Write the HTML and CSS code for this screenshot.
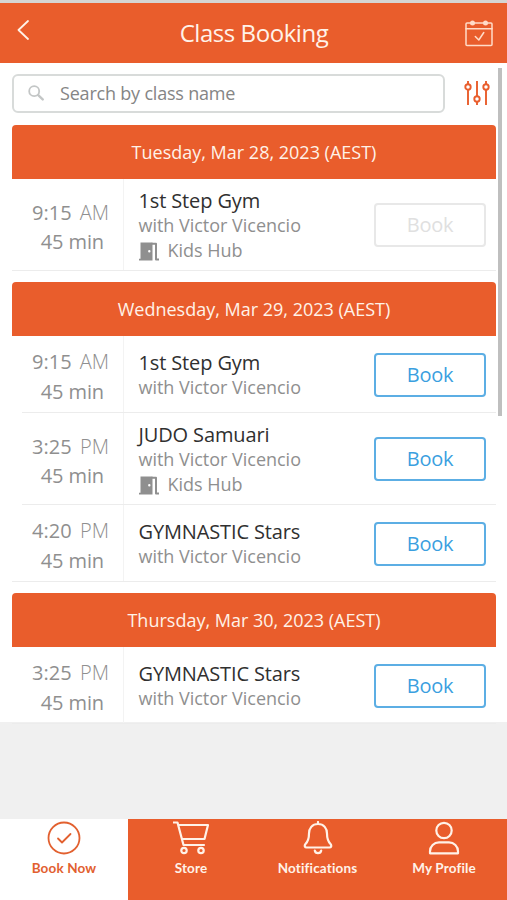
FILE: index.html
```html
<!DOCTYPE html>
<html lang="en">
<head>
<meta charset="utf-8">
<title>Class Booking</title>
<link rel="stylesheet" href="styles.css">
</head>
<body>
<svg class="defs" aria-hidden="true">
  <symbol id="door" viewBox="0 0 20 19">
    <path fill="currentColor" d="M1.500 .5H13.500V18.500H0V16.700H1.500ZM10.300 8a1.200 1.200 0 1 0 0 2.400a1.200 1.200 0 1 0 0-2.400Z" fill-rule="evenodd"/>
    <path fill="none" stroke="currentColor" stroke-width="2" d="M13 1.800h4v15.700h3"/>
  </symbol>
</svg>
<header class="topbar">
  <svg class="back" viewBox="0 0 12 20"><path d="M11 1 1.500 10 11 19"/></svg>
  <h1>Class Booking</h1>
  <svg class="calendar" viewBox="0 0 28 28"><rect x="1" y="4" width="26" height="22.500" rx="1"/><path d="M1 9.800h26M10.300 17.500l3.500 3.500 5-7.500"/><circle class="dot" cx="7.500" cy="4" r="2.500"/><circle class="dot" cx="20.500" cy="4" r="2.500"/></svg>
</header>
<main class="content">
  <div class="search-row">
    <div class="search">
      <svg viewBox="0 0 16 16"><circle cx="6.200" cy="6.200" r="5"/><path class="handle" d="m10.200 10.200 4.500 4.200"/></svg>
      <span>Search by class name</span>
    </div>
    <svg class="filter" viewBox="0 0 26 26"><path d="M4 1v3M4 10v15M13 1v15M13 22v3M22 1v3M22 10v15"/><circle cx="4" cy="7" r="2.700"/><circle cx="13" cy="19" r="2.700"/><circle cx="22" cy="7" r="2.700"/></svg>
  </div>
  <section class="day">
    <h2>Tuesday, Mar 28, 2023 (AEST)</h2>
    <article class="slot tall">
      <div class="time"><p>9:15 <i>AM</i></p><p class="length">45 min</p></div>
      <div class="info"><h3>1st Step Gym</h3><p>with Victor Vicencio</p><p class="room"><svg><use href="#door"/></svg>Kids Hub</p></div>
      <button class="book" disabled>Book</button>
    </article>
  </section>
  <section class="day">
    <h2>Wednesday, Mar 29, 2023 (AEST)</h2>
    <article class="slot">
      <div class="time"><p>9:15 <i>AM</i></p><p class="length">45 min</p></div>
      <div class="info"><h3>1st Step Gym</h3><p>with Victor Vicencio</p></div>
      <button class="book">Book</button>
    </article>
    <article class="slot tall">
      <div class="time"><p>3:25 <i>PM</i></p><p class="length">45 min</p></div>
      <div class="info"><h3>JUDO Samuari</h3><p>with Victor Vicencio</p><p class="room"><svg><use href="#door"/></svg>Kids Hub</p></div>
      <button class="book">Book</button>
    </article>
    <article class="slot">
      <div class="time"><p>4:20 <i>PM</i></p><p class="length">45 min</p></div>
      <div class="info"><h3>GYMNASTIC Stars</h3><p>with Victor Vicencio</p></div>
      <button class="book">Book</button>
    </article>
  </section>
  <section class="day">
    <h2>Thursday, Mar 30, 2023 (AEST)</h2>
    <article class="slot">
      <div class="time"><p>3:25 <i>PM</i></p><p class="length">45 min</p></div>
      <div class="info"><h3>GYMNASTIC Stars</h3><p>with Victor Vicencio</p></div>
      <button class="book">Book</button>
    </article>
  </section>
  <div class="scrollbar"></div>
</main>
<nav class="tabs">
  <a class="tab active"><svg viewBox="0 0 36 34"><circle cx="18" cy="17" r="15.500"/><path d="m12 17.500 4 4L24.500 13"/></svg><span>Book Now</span></a>
  <a class="tab"><svg viewBox="0 0 36 34"><path d="M0 1.500h4.500L10.500 24h20.500M5.500 4H35l-3.500 14H9.500"/><circle cx="11" cy="29.500" r="2.700"/><circle cx="28" cy="29.500" r="2.700"/></svg><span>Store</span></a>
  <a class="tab"><svg viewBox="0 0 36 34"><path d="M18 1v2M18 3c-6 0-9 4.500-9 9.500 0 6-1 8-3.500 10.500-1.500 2-.5 3.500 1 3.500h23c1.500 0 2.500-1.500 1-3.500C28 20.500 27 18.500 27 12.500 27 7.500 24 3 18 3ZM14.800 29.500c.5 3.500 5.900 3.500 6.400 0"/></svg><span>Notifications</span></a>
  <a class="tab"><svg viewBox="0 0 36 34"><circle cx="18" cy="9.500" r="7.700"/><path d="M4 32.300v-2c0-5 4-9 9-9h10c5 0 9 4 9 9v2Z"/></svg><span>My Profile</span></a>
</nav>
</body>
</html>
```
FILE: styles.css
```css
* { box-sizing: border-box; }
body {
  margin: 0;
  width: 507px;
  height: 900px;
  display: flex;
  flex-direction: column;
  overflow: hidden;
  background: #f0f0f0;
  font-family: "Open Sans", "Noto Sans", sans-serif;
  color: #8f8f8f;
}
h1, h2, h3, p { margin: 0; font-weight: 400; white-space: nowrap; }
svg { display: block; fill: none; stroke-linecap: round; stroke-linejoin: round; }
.defs { position: absolute; width: 0; height: 0; }

.topbar {
  flex: none;
  height: 63px;
  padding: 0 14px 0 17px;
  border-top: 3px solid #d5d5d3;
  background: #e95d2c;
  display: grid;
  grid-template-columns: 28px 1fr 28px;
  align-items: center;
  color: #fff2e8;
}
.topbar h1 { text-align: center; font-size: 24px; line-height: 34px; letter-spacing: -.45px; padding-right: 2px; }
.back { width: 12px; height: 20px; margin-top: -6px; stroke: #fff2e8; stroke-width: 1.8; }
.calendar { width: 28px; height: 28px; margin-top: -1px; stroke: #ffdcc8; stroke-width: 1.5; }
.calendar .dot { fill: #ffdcc8; stroke: none; }

.content { position: relative; flex: none; height: 659px; background: #fff; padding: 11px 11px 0 12px; }
.search-row { display: flex; align-items: center; gap: 19px; margin-bottom: 12px; }
.search {
  width: 433px;
  height: 39px;
  border: 2px solid #d8dbda;
  border-radius: 6px;
  display: flex;
  align-items: center;
  gap: 16px;
  padding: 0 14px;
  font-size: 18px;
  color: #858585;
}
.search span { letter-spacing: -.2px; margin-top: -2px; }
.search svg { width: 16px; height: 16px; margin-top: -2px; stroke: #c3c6c6; stroke-width: 1.8; }
.search .handle { stroke-width: 2.4; }
.filter { width: 26px; height: 26px; margin-top: -2px; stroke: #e95d2c; stroke-width: 1.9; stroke-linecap: butt; }

.day { margin-bottom: 11px; }
.day h2 {
  height: 54px;
  border-radius: 4px 4px 0 0;
  background: #e95d2c;
  color: #fff2e8;
  text-align: center;
  font-size: 18px;
  line-height: 54px;
}
.slot {
  position: relative;
  height: 77px;
  display: grid;
  grid-template-columns: 112px 1fr 112px;
  align-items: center;
  padding-right: 10px;
}
.slot.tall { height: 92px; }
.slot::after { content: ""; position: absolute; left: 10px; right: 0; bottom: 0; height: 1px; background: #ececec; }
.slot:last-child::after { left: 0; }
.time { align-self: stretch; border-right: 1px solid #f3f3f3; padding: 4px 14px 0 20px; display: flex; flex-direction: column; justify-content: center; font-size: 20px; line-height: 29.5px; }
.time p { display: flex; justify-content: space-between; }
.time i { font-style: normal; font-weight: 300; }
.time .length { justify-content: flex-end; padding-right: 5px; letter-spacing: -.1px; }
.info { padding: 1px 0 0 14.5px; font-size: 18px; line-height: 25px; letter-spacing: -.02px; }
.info h3 { color: #303030; font-size: 20px; line-height: 25px; letter-spacing: -.13px; }
.room { display: flex; align-items: center; gap: 9px; }
.room svg { width: 20px; height: 19px; color: #8f8f8f; margin-top: 2px; }
.book {
  width: 112px;
  height: 44px;
  padding: 0;
  border: 2px solid #5caee4;
  border-radius: 4px;
  background: #fff;
  color: #3b9fdf;
  font: 400 20px/40px "Open Sans", sans-serif;
  letter-spacing: -.3px;
}
.book:disabled { border-color: #e8e8e8; color: #e0e0e0; }
.scrollbar { position: absolute; left: 498px; top: 5px; width: 4px; height: 348px; background: #bfbfbf; }

.tabs { flex: none; height: 81px; margin-top: auto; background: #e95d2c; display: grid; grid-template-columns: 128px 126px 127px 126px; }
.tab { display: flex; flex-direction: column; align-items: center; padding-top: 2px; color: #fff2e8; }
.tab.active { background: #fff; color: #e2602f; }
.tab svg { width: 36px; height: 34px; stroke: currentColor; stroke-width: 2.2; }
.tab.active svg { stroke-width: 1.8; }
.tab span { margin-top: 5px; font: 700 13.500px/16px Lato, sans-serif; letter-spacing: .15px; }
```
